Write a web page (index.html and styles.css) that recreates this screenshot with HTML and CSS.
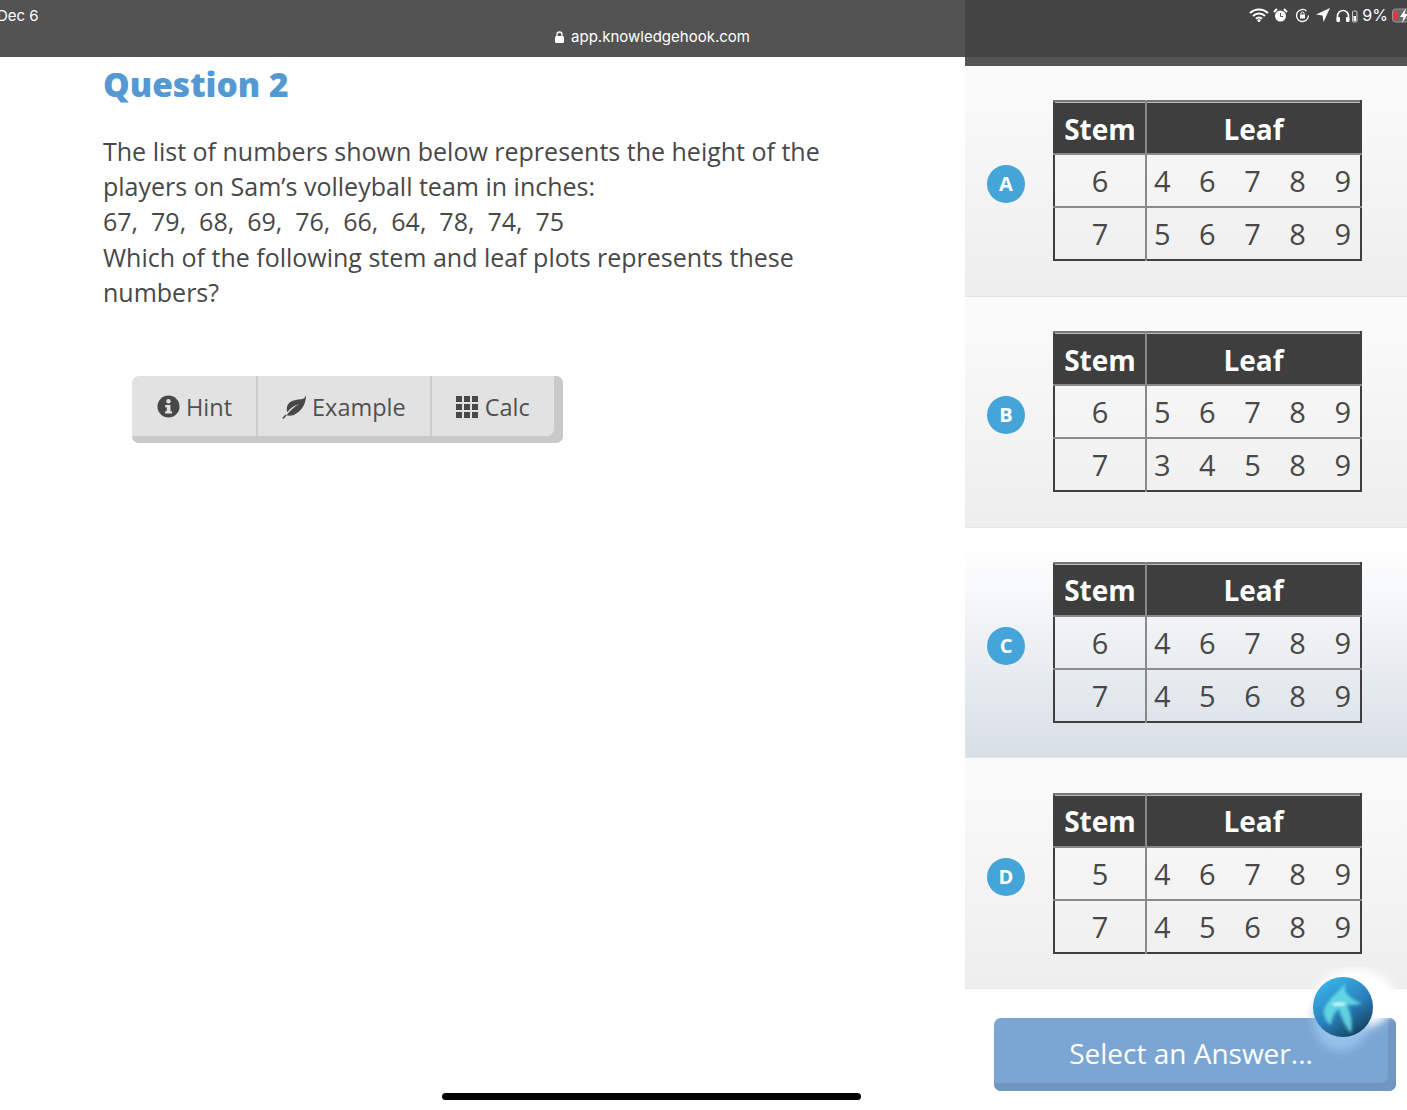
FILE: index.html
```html
<!DOCTYPE html>
<html lang="en">

<head>
    <meta charset="UTF-8">
    <meta name="viewport" content="width=device-width, initial-scale=1.0">
    <title>Question 2</title>
    <link rel="stylesheet" href="styles.css">
</head>

<body>

    <div class="topbar">
        <div class="statusRow">
            <span class="date">Dec 6</span>
            <div class="statusIcons">
                <svg width="20" height="14" viewBox="0 0 20 14"><path d="M1 5a13 13 0 0 1 18 0M4 8a8.500 8.500 0 0 1 12 0M7 10.800a4 4 0 0 1 6 0" fill="none" stroke="#fff" stroke-width="2"/><circle cx="10" cy="12.500" r="1.500" fill="#fff"/></svg>
                <svg class="alarm" width="15" height="15" viewBox="0 0 15 15"><circle cx="7.500" cy="8" r="5.500" fill="#fff"/><path d="M1 4l3-3M14 4l-3-3" stroke="#fff" stroke-width="2"/><path d="M7.500 5v3.500h2.500" fill="none" stroke="#555" stroke-width="1"/></svg>
                <svg width="15" height="15" viewBox="0 0 15 15"><path d="M13.500 7.500a6 6 0 1 1-2-4.500" fill="none" stroke="#fff" stroke-width="1.300"/><rect x="5" y="6.500" width="5" height="4" fill="#fff"/><path d="M6 6.500v-1a1.500 1.500 0 0 1 3 0v1" fill="none" stroke="#fff"/></svg>
                <svg width="14" height="14" viewBox="0 0 14 14"><path d="M14 0L0 6.500l6.500 1 1 6.500z" fill="#fff"/></svg>
                <svg width="22" height="15" viewBox="0 0 22 15"><path d="M1.500 12V8a5.500 5.500 0 0 1 11 0v4" fill="none" stroke="#fff" stroke-width="1.600"/><rect x="0.500" y="9" width="3.500" height="5" rx="1" fill="#fff"/><rect x="10" y="9" width="3.500" height="5" rx="1" fill="#fff"/><rect x="16.500" y="3" width="4.500" height="11" rx="1" fill="none" stroke="#ccc"/><rect x="17.500" y="8" width="2.500" height="5" fill="#fff"/></svg>
                <span class="percent">9%</span>
                <svg class="battery" width="16" height="15" viewBox="0 0 16 15"><rect x="0.500" y="1" width="16" height="13" rx="3" fill="#6b6b6b" stroke="#999"/><rect x="2" y="3" width="3" height="9" rx="1" fill="#e03c31"/><path d="M14 0L8 9h3.500L10 15l6-9h-3.500z" fill="#fff"/></svg>
            </div>
        </div>
        <div class="urlRow">
            <svg width="9" height="12" viewBox="0 0 9 12"><rect y="5" width="9" height="7" rx="1.500" fill="#fff"/><path d="M2 6V3.500a2.500 2.500 0 0 1 5 0V6" fill="none" stroke="#fff" stroke-width="1.300"/></svg>
            <span>app.knowledgehook.com</span>
        </div>
    </div>

    <div class="page">
        <div class="question">
            <h1>Question 2</h1>
            <p>The list of numbers shown below represents the height of the players on Sam’s volleyball team in inches:<br>
                <span class="numbers">67, 79, 68, 69, 76, 66, 64, 78, 74, 75</span><br>
                Which of the following stem and leaf plots represents these numbers?</p>

            <div class="tools">
                <button>
                    <svg width="23" height="23" viewBox="0 0 24 24"><circle cx="12" cy="12" r="11.500" fill="#484848"/><circle cx="12" cy="6.500" r="2.300" fill="#e2e2e2"/><path d="M8.500 10.500H14v6.500h1.700v2.200H8.500V17h1.700v-4.300H8.500z" fill="#e2e2e2"/></svg>
                    Hint
                </button>
                <button>
                    <svg width="24" height="24" viewBox="0 0 24 24"><path d="M24 0c-1 3-2.500 4-5.500 4.300C12 5 6 6 4.800 13c-.2 1.600 0 3 .5 4.200C8 13.500 12 10.500 17 9c-4.500 2.500-9 6.500-13.300 12.500-.7 1-1.700 2-2.700 2.200L0 23c1-.7 2-1.700 3.300-3.500 3 2 7.500 1.500 11-1C21.500 14 24 7 24 0z" fill="#484848"/></svg>
                    Example
                </button>
                <button>
                    <svg width="22" height="22" viewBox="0 0 22 22" fill="#484848"><rect width="6" height="6"/><rect x="8" width="6" height="6"/><rect x="16" width="6" height="6"/><rect y="8" width="6" height="6"/><rect x="8" y="8" width="6" height="6"/><rect x="16" y="8" width="6" height="6"/><rect y="16" width="6" height="6"/><rect x="8" y="16" width="6" height="6"/><rect x="16" y="16" width="6" height="6"/></svg>
                    Calc
                </button>
            </div>
        </div>

        <div class="answers">
            <div class="choices">
                <div class="choice">
                    <span class="letter">A</span>
                    <table>
                        <tr><th>Stem</th><th>Leaf</th></tr>
                        <tr><td class="stem">6</td><td><div class="leaf"><span>4</span><span>6</span><span>7</span><span>8</span><span>9</span></div></td></tr>
                        <tr><td class="stem">7</td><td><div class="leaf"><span>5</span><span>6</span><span>7</span><span>8</span><span>9</span></div></td></tr>
                    </table>
                </div>
                <div class="choice">
                    <span class="letter">B</span>
                    <table>
                        <tr><th>Stem</th><th>Leaf</th></tr>
                        <tr><td class="stem">6</td><td><div class="leaf"><span>5</span><span>6</span><span>7</span><span>8</span><span>9</span></div></td></tr>
                        <tr><td class="stem">7</td><td><div class="leaf"><span>3</span><span>4</span><span>5</span><span>8</span><span>9</span></div></td></tr>
                    </table>
                </div>
                <div class="choice hover">
                    <span class="letter">C</span>
                    <table>
                        <tr><th>Stem</th><th>Leaf</th></tr>
                        <tr><td class="stem">6</td><td><div class="leaf"><span>4</span><span>6</span><span>7</span><span>8</span><span>9</span></div></td></tr>
                        <tr><td class="stem">7</td><td><div class="leaf"><span>4</span><span>5</span><span>6</span><span>8</span><span>9</span></div></td></tr>
                    </table>
                </div>
                <div class="choice">
                    <span class="letter">D</span>
                    <table>
                        <tr><th>Stem</th><th>Leaf</th></tr>
                        <tr><td class="stem">5</td><td><div class="leaf"><span>4</span><span>6</span><span>7</span><span>8</span><span>9</span></div></td></tr>
                        <tr><td class="stem">7</td><td><div class="leaf"><span>4</span><span>5</span><span>6</span><span>8</span><span>9</span></div></td></tr>
                    </table>
                </div>
            </div>
            <div class="submitRow">
                <button class="submit">Select an Answer...</button>
            </div>
        </div>
    </div>

    <!-- floating things -->
    <svg class="orb" width="100" height="100" viewBox="0 0 100 100">
        <defs>
            <filter id="soft" x="-30%" y="-30%" width="160%" height="160%"><feGaussianBlur stdDeviation="4"/></filter>
            <filter id="softer" x="-20%" y="-20%" width="140%" height="140%"><feGaussianBlur stdDeviation="1.500"/></filter>
            <linearGradient id="orbBall" x1="0.150" y1="0.050" x2="0.750" y2="1">
                <stop offset="0%" stop-color="#38b6ea"/>
                <stop offset="55%" stop-color="#2b7fbb"/>
                <stop offset="100%" stop-color="#123f5c"/>
            </linearGradient>
        </defs>
        <ellipse cx="50" cy="32" rx="40" ry="30" fill="#fff" filter="url(#soft)"/>
        <ellipse cx="36" cy="52" rx="28" ry="32" fill="#9fc7ef" opacity="0.800" filter="url(#soft)"/>
        <circle cx="38" cy="40" r="30" fill="url(#orbBall)"/>
        <path d="M40 16C36 24 24 30 19 42c-1 8 3 14 7 16 1-8 4-14 8-16 2 8 6 18 12 24 2-10 0-20-4-28 6 0 11 0 15-2-7-2-13-6-17-12z" fill="#69e2e8" opacity="0.850" filter="url(#softer)"/>
        <ellipse cx="34" cy="37" rx="7" ry="2" fill="#e2fdf9" opacity="0.800" filter="url(#softer)"/>
    </svg>
    <div class="homeBar"></div>

</body>

</html>
```

FILE: styles.css
```css
html, body {
    margin: 0px;
    padding: 0px;
    height: 1110px;
    overflow: hidden;
    background: white;
    font-family: 'Open Sans', sans-serif;
    color: #484848;
}

.topbar {
    height: 57px;
    background: linear-gradient(to right, #535353 965px, #444444 965px);
    color: white;
    font-family: Inter, 'Liberation Sans', sans-serif;
    font-size: 15px;
}

.statusRow {
    height: 26px;
    padding-top: 4px;
    display: flex;
    justify-content: space-between;
    align-items: center;
    box-sizing: border-box;
    overflow: hidden;
}

.date {
    margin-left: -3px;
}

.statusIcons {
    display: flex;
    align-items: center;
    gap: 6px;
    margin-right: -1px;
}

.alarm {
    margin-left: -2px;
    margin-right: 1px;
}

.percent {
    font-size: 16px;
    margin-left: -2px;
}

.battery {
    margin-left: -2px;
}

.urlRow {
    height: 21px;
    padding-right: 102px;
    display: flex;
    justify-content: center;
    align-items: center;
    gap: 7px;
}

.page {
    display: flex;
}

.question {
    width: 965px;
    box-sizing: border-box;
    padding-left: 103px;
}

.question h1 {
    margin: 6px 0px 0px;
    font-size: 33.5px;
    line-height: 43px;
    font-weight: 800;
    color: #5499d2;
}

.question p {
    width: 740px;
    margin: 28px 0px 0px;
    font-size: 25px;
    line-height: 35.2px;
}

.numbers {
    word-spacing: 6.5px;
}

.tools {
    display: inline-flex;
    margin: 66px 0px 0px 29px;
    background: #e2e2e2;
    border-radius: 7px;
    box-shadow: inset -9px -7px 0px #c9c9c9;
    padding: 0px 9px 7px 0px;
}

.tools button {
    display: flex;
    align-items: center;
    gap: 6px;
    height: 60px;
    padding: 1px 24px 0px 24px;
    border: none;
    border-right: 2px solid #cdcdcd;
    background: none;
    color: #505050;
    font-family: inherit;
    font-size: 23.5px;
}

.tools button:first-child {
    padding-left: 25px;
}

.tools button:last-child {
    gap: 7px;
    border-right: none;
}

.answers {
    width: 442px;
    background: #ffffff;
}

.choices {
    margin-top: 0px;
    border-top: 9px solid #555555;
    height: 923px;
    display: grid;
    grid-template-rows: repeat(4, 1fr);
}

.choice {
    display: flex;
    align-items: center;
    padding-left: 22px;
    background: linear-gradient(#fbfbfb, #eeeeee);
    border-bottom: 1px solid #e6e6e6;
}

.choice.hover {
    background: linear-gradient(#ffffff 8%, #d8dfe6);
}

.letter {
    width: 38px;
    height: 38px;
    margin-top: 7px;
    margin-right: 28px;
    border-radius: 50%;
    background: #45a5d8;
    color: white;
    font-weight: 700;
    font-size: 20px;
    line-height: 38px;
    text-align: center;
}

table {
    width: 309px;
    height: 161px;
    table-layout: fixed;
    border-collapse: collapse;
    border: 2px solid #3f3f3f;
    border-top: 2px solid #777777;
}

th {
    height: 49px;
    padding: 2px 0px 0px;
    background: #3e3e3e;
    color: white;
    font-size: 28px;
    font-weight: 700;
    box-shadow: inset 0px 1px 0px #bbbbbb;
}

th:first-child {
    width: 90px;
    border-right: 2px solid #8a8a8a;
}

td {
    padding: 0px;
    text-align: center;
    font-size: 29px;
    color: #484848;
    border-top: 2px solid #8a8a8a;
}

.stem {
    border-right: 2px solid #8a8a8a;
}

.leaf {
    display: flex;
    justify-content: space-between;
    padding: 0px 9px 0px 7px;
}

.submitRow {
    padding: 29px 11px 0px 29px;
}

.submit {
    display: block;
    width: 100%;
    height: 73px;
    padding: 0px 8px 4px 0px;
    border: none;
    border-radius: 7px;
    background: #7ba6d4;
    box-shadow: inset -8px -8px 0px #7296c2;
    color: white;
    font-family: inherit;
    font-size: 28px;
    font-weight: 400;
}

.orb {
    position: absolute;
    left: 1305px;
    top: 967px;
}

.homeBar {
    position: absolute;
    left: 442px;
    top: 1093px;
    width: 419px;
    height: 7px;
    border-radius: 4px;
    background: black;
}
```
